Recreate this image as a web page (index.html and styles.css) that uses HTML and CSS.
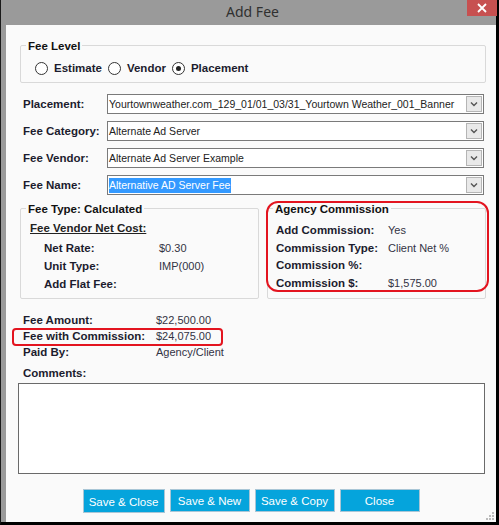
FILE: index.html
```html
<!DOCTYPE html>
<html lang="en">
<head>
  <meta charset="UTF-8">
  <title>Add Fee</title>
  <link rel="stylesheet" href="styles.css">
</head>
<body>

  <div class="window">
    <!-- Title Bar -->
    <div class="titlebar">
      <span class="title">Add Fee</span>
      <span class="close-btn">
        <svg width="10" height="10" viewBox="0 0 10 10"><path d="M1 1 L9 9 M9 1 L1 9" stroke="#fff" stroke-width="1.8"/></svg>
      </span>
    </div>

    <div class="frame">
      <div class="client">

        <!-- Fee Level -->
        <div class="group level-group">
          <span class="group-title">Fee Level</span>
          <div class="radios">
            <span class="radio"></span><span class="radio-text">Estimate</span>
            <span class="radio"></span><span class="radio-text">Vendor</span>
            <span class="radio checked"></span><span class="radio-text">Placement</span>
          </div>
        </div>

        <!-- Dropdown Rows -->
        <div class="fields">
          <div class="field-row">
            <span class="label">Placement:</span>
            <div class="select">
              <span class="select-text">Yourtownweather.com_129_01/01_03/31_Yourtown Weather_001_Banner</span>
              <span class="select-arrow"><svg width="8" height="6" viewBox="0 0 8 6"><path d="M1 1.5 L4 4.5 L7 1.5" fill="none" stroke="#555" stroke-width="1.4"/></svg></span>
            </div>
          </div>
          <div class="field-row">
            <span class="label">Fee Category:</span>
            <div class="select">
              <span class="select-text">Alternate Ad Server</span>
              <span class="select-arrow"><svg width="8" height="6" viewBox="0 0 8 6"><path d="M1 1.5 L4 4.5 L7 1.5" fill="none" stroke="#555" stroke-width="1.4"/></svg></span>
            </div>
          </div>
          <div class="field-row">
            <span class="label">Fee Vendor:</span>
            <div class="select">
              <span class="select-text">Alternate Ad Server Example</span>
              <span class="select-arrow"><svg width="8" height="6" viewBox="0 0 8 6"><path d="M1 1.5 L4 4.5 L7 1.5" fill="none" stroke="#555" stroke-width="1.4"/></svg></span>
            </div>
          </div>
          <div class="field-row">
            <span class="label">Fee Name:</span>
            <div class="select">
              <span class="select-text"><span class="highlight">Alternative AD Server Fee</span></span>
              <span class="select-arrow"><svg width="8" height="6" viewBox="0 0 8 6"><path d="M1 1.5 L4 4.5 L7 1.5" fill="none" stroke="#555" stroke-width="1.4"/></svg></span>
            </div>
          </div>
        </div>

        <!-- Fee Type / Agency Commission -->
        <div class="group-pair">
          <div class="group type-group">
            <span class="group-title">Fee Type: Calculated</span>
            <div class="net-cost">Fee Vendor Net Cost:</div>
            <div class="info-row"><span class="info-label">Net Rate:</span><span class="value">$0.30</span></div>
            <div class="info-row"><span class="info-label">Unit Type:</span><span class="value">IMP(000)</span></div>
            <div class="info-row"><span class="info-label">Add Flat Fee:</span><span class="value"></span></div>
          </div>
          <div class="group agency-group">
            <span class="group-title">Agency Commission</span>
            <div class="agency-rows">
              <div class="info-row"><span class="info-label">Add Commission:</span><span class="value">Yes</span></div>
              <div class="info-row"><span class="info-label">Commission Type:</span><span class="value">Client Net %</span></div>
              <div class="info-row"><span class="info-label">Commission %:</span><span class="value"></span></div>
              <div class="info-row"><span class="info-label">Commission $:</span><span class="value">$1,575.00</span></div>
            </div>
            <span class="red-mark agency-mark"></span>
          </div>
        </div>

        <!-- Totals -->
        <div class="totals">
          <div class="total-row"><span class="total-label">Fee Amount:</span><span class="value">$22,500.00</span></div>
          <div class="total-row marked"><span class="total-label">Fee with Commission:</span><span class="value">$24,075.00</span><span class="red-mark total-mark"></span></div>
          <div class="total-row"><span class="total-label">Paid By:</span><span class="value">Agency/Client</span></div>
        </div>

        <!-- Comments -->
        <div class="comments-label">Comments:</div>
        <div class="comments-box"></div>

        <!-- Buttons -->
        <div class="buttons">
          <button class="button first">Save &amp; Close</button>
          <button class="button">Save &amp; New</button>
          <button class="button">Save &amp; Copy</button>
          <button class="button">Close</button>
        </div>

        <svg class="grip" width="9" height="9" viewBox="0 0 9 9">
          <rect x="6" y="0" width="2" height="2" fill="#bbb"/>
          <rect x="3" y="3" width="2" height="2" fill="#bbb"/>
          <rect x="6" y="3" width="2" height="2" fill="#bbb"/>
          <rect x="0" y="6" width="2" height="2" fill="#bbb"/>
          <rect x="3" y="6" width="2" height="2" fill="#bbb"/>
          <rect x="6" y="6" width="2" height="2" fill="#bbb"/>
        </svg>
      </div>
    </div>
  </div>

</body>
</html>
```

FILE: styles.css
```css
/* General Reset */
* {
  margin: 0;
  padding: 0;
  box-sizing: border-box;
  font-family: "Liberation Sans", Arial, sans-serif;
}

body {
  width: 499px;
  height: 525px;
  background-color: #000;
  overflow: hidden;
}

/* Window Frame */
.window {
  width: 499px;
  height: 525px;
  background-color: #9a9a9a;
  border-left: 1px solid #1a1a1a;
  border-right: 3px solid #000;
  border-bottom: 3px solid #000;
  display: flex;
  flex-direction: column;
}

.titlebar {
  height: 25px;
  position: relative;
  display: flex;
  justify-content: center;
  align-items: center;
  padding-left: 8px;
}

.title {
  font-family: "Noto Sans", "Open Sans", sans-serif;
  font-size: 14px;
  color: #303030;
  margin-top: -2px;
}

.close-btn {
  position: absolute;
  top: 0;
  right: -1px;
  width: 30px;
  height: 16px;
  background-color: #c75050;
  display: flex;
  justify-content: center;
  align-items: center;
}

.frame {
  flex: 1;
  display: flex;
  padding-left: 5px;
  min-width: 0;
}

.client {
  flex: 1;
  min-width: 0;
  position: relative;
  background-color: #fafafa;
  padding: 20px 10px 0 14px;
  color: #1c1c2e;
}

/* Group Boxes */
.group {
  border: 1px solid #d9d9d9;
  border-radius: 2px;
  position: relative;
  font-size: 11.5px;
}

.group-title {
  display: block;
  width: fit-content;
  margin: -7px 0 0 5px;
  padding: 0 2px;
  line-height: 14px;
  font-size: 11.5px;
  font-weight: bold;
  color: #111;
  background-color: #fafafa;
}

.level-group {
  height: 38px;
}

.radios {
  display: flex;
  align-items: center;
  height: 16px;
  margin: 7px 0 0 14px;
}

.radio {
  width: 13px;
  height: 13px;
  border: 1px solid #333;
  border-radius: 50%;
  background-color: #fff;
  display: flex;
  justify-content: center;
  align-items: center;
}

.radio.checked::after {
  content: "";
  width: 5px;
  height: 5px;
  border-radius: 50%;
  background-color: #222;
}

.radio-text {
  font-size: 11.5px;
  font-weight: bold;
  color: #1c1c2e;
  margin: 0 6px 0 6px;
}

/* Dropdown Rows */
.fields {
  margin-top: 11px;
  display: flex;
  flex-direction: column;
  gap: 7px;
}

.field-row {
  display: flex;
  align-items: center;
  padding-left: 3px;
  padding-right: 2px;
}

.label {
  width: 84px;
  font-size: 11.5px;
  font-weight: bold;
  color: #1c1c2e;
}

.select {
  flex: 1;
  min-width: 0;
  height: 20px;
  display: flex;
  border: 1px solid #7a7a7a;
  background-color: #fff;
}

.select-text {
  flex: 1;
  min-width: 0;
  overflow: hidden;
  white-space: nowrap;
  font-size: 10.5px;
  line-height: 18px;
  padding-left: 1px;
  color: #222;
}

.highlight {
  background-color: #3399ff;
  color: #fff;
  padding: 1px 1px 2px 0;
}

.select-arrow {
  width: 16px;
  margin: 1px 1px 1px 0;
  border: 1px solid #b5b5b5;
  background-color: #e9e9e9;
  display: flex;
  justify-content: center;
  align-items: center;
}

/* Fee Type / Agency */
.group-pair {
  display: flex;
  gap: 8px;
  margin-top: 13px;
}

.type-group {
  width: 239px;
  height: 91px;
}

.agency-group {
  flex: 1;
  height: 91px;
}

.net-cost {
  font-size: 11.5px;
  font-weight: bold;
  text-decoration: underline;
  color: #222;
  margin: 5px 0 0 9px;
  line-height: 14px;
}

.info-row {
  display: flex;
  line-height: 17.5px;
  font-size: 11.5px;
}

.type-group .info-row {
  padding-left: 23px;
  line-height: 18px;
}

.type-group .net-cost + .info-row {
  margin-top: 4px;
}

.info-label {
  font-weight: bold;
  color: #1c1c2e;
}

.type-group .info-label {
  width: 115px;
}

.agency-rows {
  margin-top: 6px;
  padding-left: 8px;
}

.agency-group .info-label {
  width: 112px;
}

.value {
  font-size: 11px;
  color: #333344;
}

/* Red annotation marks */
.red-mark {
  position: absolute;
  border: 2px solid #e3141f;
  pointer-events: none;
}

.agency-mark {
  left: -2px;
  top: -8px;
  right: -4px;
  bottom: 6px;
  border-radius: 12px;
}

.total-mark {
  left: -11px;
  top: 0;
  width: 211px;
  height: 18px;
  border-radius: 4px;
}

/* Totals */
.totals {
  margin-top: 13px;
  padding-left: 3px;
}

.total-row {
  display: flex;
  align-items: center;
  height: 16px;
  position: relative;
}

.total-label {
  width: 133px;
  font-size: 11.5px;
  font-weight: bold;
  color: #1c1c2e;
}

/* Comments */
.comments-label {
  margin: 6px 0 0 3px;
  line-height: 14px;
  font-size: 11.5px;
  font-weight: bold;
  color: #1c1c2e;
}

.comments-box {
  margin: 3px 0 0 -2px;
  width: 467px;
  height: 91px;
  border: 1px solid #6a6a6a;
  background-color: #fff;
}

/* Buttons */
.buttons {
  display: flex;
  justify-content: center;
  align-items: flex-start;
  gap: 5px;
  margin: 15px -10px 0 -14px;
}

.button {
  width: 80px;
  height: 23px;
  background-color: #05a4dc;
  border: 1px solid #a9c6d6;
  color: #fff;
  font-family: "Liberation Sans", Arial, sans-serif;
  font-size: 11.5px;
  cursor: pointer;
}

.button.first {
  width: 82px;
  height: 24px;
  padding-top: 1px;
}

.grip {
  position: absolute;
  right: 1px;
  bottom: 1px;
}
```
